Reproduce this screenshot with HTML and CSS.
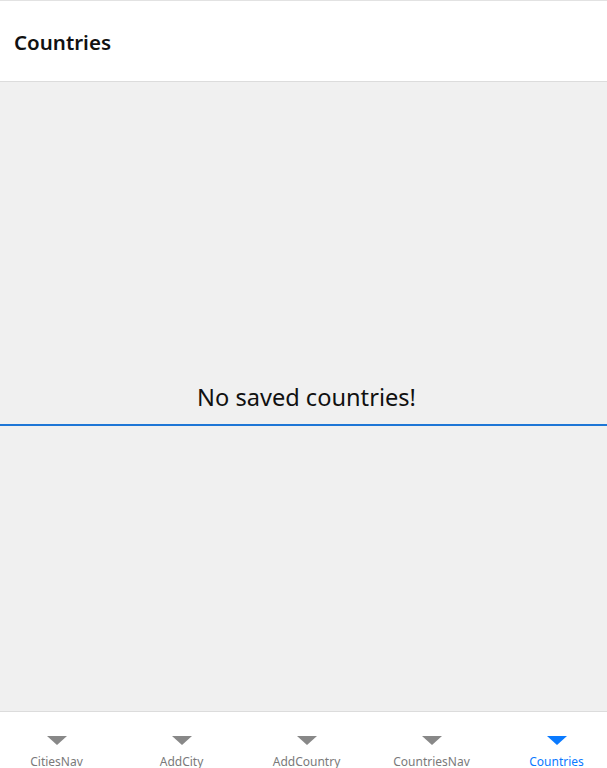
FILE: index.html
```html
<!DOCTYPE html>
<html>
<head>
<meta charset="utf-8">
<link rel="stylesheet" href="styles.css">
</head>
<body>
<div class="page">
  <header class="header"><h1 class="title">Countries</h1></header>
  <main class="main">
    <p class="empty">No saved countries!</p>
    <div class="rule"></div>
  </main>
  <nav class="tabs">
    <div class="tab"><span class="tri"></span><span class="label">CitiesNav</span></div>
    <div class="tab"><span class="tri"></span><span class="label">AddCity</span></div>
    <div class="tab"><span class="tri"></span><span class="label">AddCountry</span></div>
    <div class="tab"><span class="tri"></span><span class="label">CountriesNav</span></div>
    <div class="tab active"><span class="tri"></span><span class="label">Countries</span></div>
  </nav>
</div>
</body>
</html>
```
FILE: styles.css
```css
html, body { margin: 0; padding: 0; }
body { font-family: "Noto Sans", "Open Sans", sans-serif; background: #fff; }
.page { width: 607px; height: 768px; display: flex; flex-direction: column; overflow: hidden; }
.header { flex: 0 0 auto; height: 80px; box-sizing: content-box; border-top: 1px solid #e2e2e2; border-bottom: 1px solid #dcdcdc; background: #fff; display: flex; align-items: center; padding-left: 14px; }
.title { margin: 3px 0 0; font-size: 20.5px; font-weight: 600; color: #111; line-height: 1; }
.main { flex: 1 1 auto; min-height: 0; background: #f0f0f0; padding-top: 299px; box-sizing: border-box; }
.empty { margin: 0; padding-left: 6px; text-align: center; font-size: 23.6px; line-height: 32px; color: #111; }
.rule { height: 2px; background: #1e76d6; margin-top: 11px; }
.tabs { flex: 0 0 56px; min-height: 0; overflow: hidden; border-top: 1px solid #dcdcdc; background: #fff; display: grid; grid-template-columns: repeat(5, 125px); grid-template-rows: 56px; margin-left: -6px; width: 625px; }
.tab { display: flex; flex-direction: column; align-items: center; padding-top: 24px; color: #7a7a7a; overflow: hidden; }
.tri { flex: none; width: 0; height: 0; border-left: 10px solid transparent; border-right: 10px solid transparent; border-top: 9px solid #888; }
.label { flex: none; font-size: 12px; margin-top: 9px; line-height: 16px; }
.tab.active { color: #0a7aff; }
.tab.active .tri { border-top-color: #0a7aff; }
```
